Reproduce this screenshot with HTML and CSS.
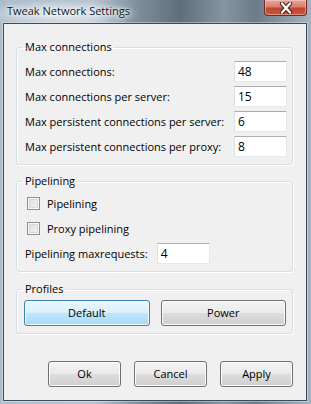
FILE: index.html
```html
<!DOCTYPE html>
<html>
<head>
<meta charset="utf-8">
<link rel="stylesheet" href="styles.css">
</head>
<body>
<div class="window">
  <div class="titlebar">
    <span class="title">Tweak Network Settings</span>
    <div class="close">
      <svg width="18" height="12" viewBox="0 0 18 12">
        <path d="M5 1.5 L13 10.5 M13 1.5 L5 10.5" stroke="#3a2020" stroke-width="4.2" stroke-linecap="round" fill="none"/>
        <path d="M5 1.5 L13 10.5 M13 1.5 L5 10.5" stroke="#ffffff" stroke-width="2.4" stroke-linecap="round" fill="none"/>
      </svg>
    </div>
  </div>
  <div class="client">
    <fieldset class="group group-conn">
      <legend>Max connections</legend>
      <div class="row"><span>Max connections:</span><span class="input">48</span></div>
      <div class="row"><span>Max connections per server:</span><span class="input">15</span></div>
      <div class="row"><span>Max persistent connections per server:</span><span class="input">6</span></div>
      <div class="row"><span>Max persistent connections per proxy:</span><span class="input">8</span></div>
    </fieldset>
    <fieldset class="group group-pipe">
      <legend>Pipelining</legend>
      <div class="row check"><span class="box"></span><span>Pipelining</span></div>
      <div class="row check"><span class="box"></span><span>Proxy pipelining</span></div>
      <div class="row start"><span>Pipelining maxrequests:</span><span class="input">4</span></div>
    </fieldset>
    <fieldset class="group group-prof">
      <legend>Profiles</legend>
      <div class="profiles">
        <span class="btn btn-hot">Default</span>
        <span class="btn">Power</span>
      </div>
    </fieldset>
    <div class="actions">
      <span class="btn btn-small">Ok</span>
      <span class="btn btn-small">Cancel</span>
      <span class="btn btn-small">Apply</span>
    </div>
  </div>
</div>
</body>
</html>
```
FILE: styles.css
```css
html, body {
  margin: 0;
  padding: 0;
}
body {
  width: 311px;
  height: 404px;
  overflow: hidden;
  font-family: "Open Sans", "Noto Sans", sans-serif;
  font-size: 11px;
  color: #000;
  white-space: nowrap;
}
.window {
  width: 311px;
  height: 404px;
  box-sizing: border-box;
  padding: 0 4px 3px 3px;
  display: flex;
  flex-direction: column;
  background:
    radial-gradient(ellipse 80px 14px at 60px 14px, rgba(235,242,248,0.9), rgba(235,242,248,0) 100%),
    linear-gradient(90deg, #aebdca 0%, #b7c5d1 30%, #7c8c9a 45%, #5f6f7d 58%, #8595a3 72%, #6b7b89 82%, #a5b4c2 100%);
}
.titlebar {
  height: 23px;
  flex: none;
  display: flex;
  justify-content: space-between;
  align-items: flex-start;
}
.title {
  margin: 3px 0 0 4px;
  font-size: 11px;
  line-height: 16px;
  color: #0b1a2a;
  text-shadow: 0 0 6px #fff, 0 0 3px #fff;
}
.close {
  width: 43px;
  height: 16px;
  box-sizing: border-box;
  border: 1px solid #6b2a22;
  border-top: none;
  border-radius: 0 0 4px 4px;
  background: linear-gradient(180deg, #e9a99c 0%, #d87e6d 45%, #c2452f 55%, #c9553c 100%);
  box-shadow: inset 0 0 0 1px rgba(255,210,200,0.5);
  display: flex;
  justify-content: center;
  align-items: center;
}
.client {
  flex: 1;
  background: #f0f0f0;
  border: 1px solid #3c4b58;
  box-shadow: 0 0 0 1px rgba(255,255,255,0.35);
  display: flex;
  flex-direction: column;
}
.group {
  margin: 0 13px 0 12px;
  padding: 0 5px 7px 7px;
  border: 1px solid #d5dfe5;
  border-radius: 3px;
  box-shadow: inset 1px 1px 0 #fff, 1px 1px 0 #fff;
  min-width: 0;
}
.group legend {
  padding: 0 2px 0 3px;
  margin-left: -2px;
  line-height: 16px;
  height: 16px;
}
.group-conn {
  margin-top: 15px;
  padding-top: 6px;
  padding-bottom: 7px;
}
.group-pipe {
  margin-top: 8px;
  padding-top: 4px;
  padding-bottom: 7px;
}
.group-prof {
  margin-top: 9px;
  padding-top: 3px;
  padding-bottom: 7px;
  padding-right: 6px;
}
.row {
  display: flex;
  justify-content: space-between;
  align-items: center;
  height: 21px;
  padding-left: 1px;
  margin-bottom: 4px;
}
.row:last-child {
  margin-bottom: 0;
}
.row.check {
  justify-content: flex-start;
  gap: 7px;
  padding-left: 3px;
}
.row.start {
  justify-content: flex-start;
  gap: 9px;
}
.box {
  width: 13px;
  height: 13px;
  box-sizing: border-box;
  border: 1px solid #8e8f8f;
  background: linear-gradient(135deg, #dcdcdc 0%, #f4f4f4 100%);
  box-shadow: inset 0 0 0 1px #f6f6f6, inset 0 0 0 2px #d8d8d8;
}
.input {
  width: 53px;
  height: 21px;
  box-sizing: border-box;
  background: #fff;
  border: 1px solid #e3e9ef;
  border-top-color: #abadb3;
  border-left-color: #dbdfe6;
  padding-left: 3px;
  line-height: 19px;
  font-size: 12px;
}
.profiles {
  display: flex;
  gap: 11px;
}
.btn {
  flex: 1;
  height: 26px;
  box-sizing: border-box;
  border: 1px solid #707070;
  border-radius: 3px;
  background: linear-gradient(180deg, #f2f2f2 0%, #ebebeb 48%, #dddddd 52%, #cfcfcf 100%);
  box-shadow: inset 0 0 0 1px #fbfbfb;
  display: flex;
  align-items: center;
  justify-content: center;
  line-height: 16px;
}
.btn-hot {
  border-color: #3c7fb1;
  background: linear-gradient(180deg, #eaf6fd 0%, #d9f0fc 48%, #bee6fd 52%, #a7d9f5 100%);
  box-shadow: inset 0 0 0 1px #f4fbff;
}
.actions {
  margin-top: auto;
  margin-bottom: 13px;
  display: flex;
  justify-content: flex-end;
  gap: 13px;
  padding-right: 13px;
}
.btn-small {
  flex: none;
  width: 73px;
}
```
